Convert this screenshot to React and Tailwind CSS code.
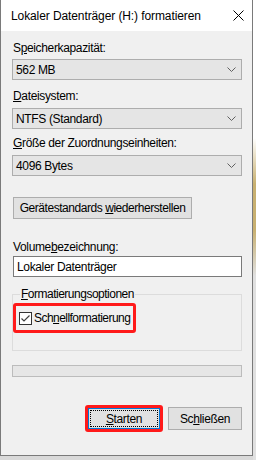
import { useState } from "react";

const font = { fontFamily: '"Liberation Sans", Arial, sans-serif' };

function Chevron() {
  return (
    <svg width="9" height="5" viewBox="0 0 9 5" className="shrink-0">
      <path d="M0.5 0.5 L4.5 4.5 L8.5 0.5" fill="none" stroke="#606060" strokeWidth="1" />
    </svg>
  );
}

function Combo({ value }) {
  return (
    <div className="flex h-[21px] w-[230px] items-center justify-between border border-[#adadad] bg-[#e5e5e5] pl-[3px] pr-[5px] text-[12px] text-black">
      <span>{value}</span>
      <Chevron />
    </div>
  );
}

function Label({ children, className = "" }) {
  return <div className={`h-[16px] whitespace-nowrap text-[12px] leading-[16px] text-black ${className}`}>{children}</div>;
}

export default function App() {
  const [quick, setQuick] = useState(true);
  const [label, setLabel] = useState("Lokaler Datenträger");

  return (
    <div className="flex h-[460px] w-[256px] bg-[#d9d9d9] tracking-[-0.35px]" style={font}>
      <div className="flex h-[456px] w-[253px] flex-col border border-t-0 border-[#7a7a7a] bg-[#f0f0f0]">
        {/* title bar */}
        <div className="flex h-[31px] items-center justify-between bg-white pl-[10px] pr-[8px]">
          <span className="whitespace-nowrap text-[12px] tracking-[-0.1px] text-black">Lokaler Datenträger (H:) formatieren</span>
          <svg width="11" height="11" viewBox="0 0 11 11">
            <path d="M0.5 0.5 L10.5 10.5 M10.5 0.5 L0.5 10.5" stroke="#000" strokeWidth="1" />
          </svg>
        </div>

        <div className="flex flex-col pl-[11px] pt-[9px]">
          <Label className="pl-[1px]">
            S<span className="underline">p</span>eicherkapazität:
          </Label>
          <div className="mt-[3px]">
            <Combo value="562 MB" />
          </div>

          <Label className="mt-[8px] pl-[1px]">
            <span className="underline">D</span>ateisystem:
          </Label>
          <div className="mt-[4px]">
            <Combo value="NTFS (Standard)" />
          </div>

          <Label className="mt-[6px] pl-[1px]">
            <span className="underline">G</span>röße der Zuordnungseinheiten:
          </Label>
          <div className="mt-[4px]">
            <Combo value="4096 Bytes" />
          </div>

          <button className="ml-[1px] mt-[21px] h-[22px] w-[179px] whitespace-nowrap border border-[#adadad] bg-[#e1e1e1] text-[12px] tracking-[-0.45px] text-black">
            Gerätestandards <span className="underline">w</span>iederherstellen
          </button>

          <Label className="mt-[20px] pl-[1px]">
            Volume<span className="underline">b</span>ezeichnung:
          </Label>
          <input
            value={label}
            onChange={(e) => setLabel(e.target.value)}
            className="ml-[1px] mt-[1px] h-[21px] w-[229px] border border-[#7a7a7a] bg-white px-[3px] text-[12px] tracking-[-0.35px] text-black outline-none"
          />

          <fieldset className="mt-[9px] h-[65px] w-[230px] border border-[#dcdcdc] pl-0">
            <legend className="ml-[7px] whitespace-nowrap px-[1px] text-[12px] leading-[16px] tracking-[-0.5px] text-black">
              <span className="underline">F</span>ormatierungsoptionen
            </legend>
            <div className="mt-[1px] flex h-[30px] w-[123px] items-center rounded-[3px] border-[3px] border-[#ff1a1a] pl-[3px]">
              <button
                onClick={() => setQuick(!quick)}
                className="flex h-[13px] w-[13px] shrink-0 items-center justify-center border border-[#333333] bg-white"
              >
                {quick && (
                  <svg width="11" height="11" viewBox="0 0 11 11">
                    <path d="M1.5 5.5 L4 8 L9.5 2.5" fill="none" stroke="#404040" strokeWidth="1.2" />
                  </svg>
                )}
              </button>
              <span className="ml-[2px] whitespace-nowrap text-[12px] tracking-[-0.55px] text-black">
                Sch<span className="underline">n</span>ellformatierung
              </span>
            </div>
          </fieldset>

          <div className="mt-[14px] h-[12px] w-[230px] border border-[#bcbcbc] bg-[#e6e6e6]" />

          <div className="mt-[28px] flex items-center pl-[73px]">
            <div className="rounded-[3px] border-[3px] border-[#ff1a1a]">
              <button className="flex h-[21px] w-[72px] items-center justify-center border border-[#0078d7] bg-[#e1e1e1] p-[1px] text-[12px] text-black">
                <span className="flex h-full w-full items-center justify-center border border-dotted border-black">
                  <span className="underline">S</span>tarten
                </span>
              </button>
            </div>
            <button className="ml-[5px] h-[23px] w-[74px] border border-[#adadad] bg-[#e1e1e1] text-[12px] text-black">
              Sc<span className="underline">h</span>ließen
            </button>
          </div>
        </div>
      </div>
      <div className="flex-1 bg-[linear-gradient(to_bottom,#ffffff_0%,#ffffff_30%,#c8b070_40%,#c8b070_50%,#e0e0e0_60%,#e0e0e0_100%)]" />
    </div>
  );
}
